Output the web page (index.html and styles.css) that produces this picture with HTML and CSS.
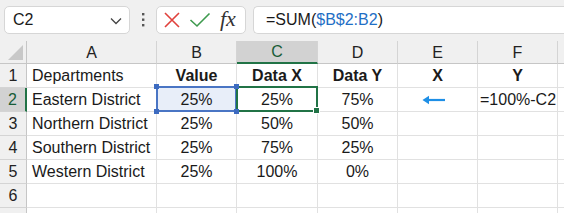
FILE: index.html
```html
<!DOCTYPE html>
<html lang="en">
<head>
  <meta charset="UTF-8">
  <title>Sheet</title>
  <link rel="stylesheet" href="styles.css">
</head>
<body>
  <!-- Formula toolbar -->
  <div class="toolbar">
    <div class="name-box">
      <span>C2</span>
      <svg class="chevron" width="12" height="8" viewBox="0 0 12 8"><path d="M1 1.5 L6 6.5 L11 1.5" fill="none" stroke="#444" stroke-width="1.3"/></svg>
    </div>
    <svg class="grip" width="4" height="16" viewBox="0 0 4 16"><rect x="1" y="1" width="2.4" height="2.4" fill="#555"/><rect x="1" y="6.5" width="2.4" height="2.4" fill="#555"/><rect x="1" y="12" width="2.4" height="2.4" fill="#555"/></svg>
    <div class="fx-buttons">
      <svg width="18" height="18" viewBox="0 0 18 18"><path d="M2 2 L16 16 M16 2 L2 16" stroke="#e0413c" stroke-width="1.6" fill="none"/></svg>
      <svg width="22" height="18" viewBox="0 0 22 18"><path d="M1.5 9 L8 15 L20.5 2.5" stroke="#3e9a4e" stroke-width="1.6" fill="none"/></svg>
      <span class="fx">fx</span>
    </div>
    <div class="formula">=SUM(<span class="ref">$B$2:B2</span>)</div>
  </div>

  <!-- Grid -->
  <div class="sheet">
    <div class="hdr corner"><span class="tri"></span></div>
    <div class="hdr col">A</div>
    <div class="hdr col">B</div>
    <div class="hdr col active">C</div>
    <div class="hdr col">D</div>
    <div class="hdr col">E</div>
    <div class="hdr col">F</div>
    <div class="hdr col"></div>

    <div class="hdr row">1</div>
    <div class="cell left">Departments</div>
    <div class="cell bold">Value</div>
    <div class="cell bold">Data X</div>
    <div class="cell bold">Data Y</div>
    <div class="cell bold">X</div>
    <div class="cell bold">Y</div>
    <div class="cell"></div>

    <div class="hdr row active">2</div>
    <div class="cell left">Eastern District</div>
    <div class="cell ref-cell">25%<i class="h tl"></i><i class="h tr"></i><i class="h bl"></i><i class="h br"></i></div>
    <div class="cell current">25%<i class="fill-handle"></i></div>
    <div class="cell">75%</div>
    <div class="cell arrow-cell"><svg width="24" height="10" viewBox="0 0 24 10"><path d="M23 5 H4" stroke="#1e8fe6" stroke-width="2.2"/><path d="M0.5 5 L7 0.8 L7 9.2 Z" fill="#1e8fe6"/></svg></div>
    <div class="cell left tight">=100%-C2</div>
    <div class="cell"></div>

    <div class="hdr row">3</div>
    <div class="cell left">Northern District</div>
    <div class="cell">25%</div>
    <div class="cell">50%</div>
    <div class="cell">50%</div>
    <div class="cell"></div>
    <div class="cell"></div>
    <div class="cell"></div>

    <div class="hdr row">4</div>
    <div class="cell left">Southern District</div>
    <div class="cell">25%</div>
    <div class="cell">75%</div>
    <div class="cell">25%</div>
    <div class="cell"></div>
    <div class="cell"></div>
    <div class="cell"></div>

    <div class="hdr row">5</div>
    <div class="cell left">Western District</div>
    <div class="cell">25%</div>
    <div class="cell">100%</div>
    <div class="cell">0%</div>
    <div class="cell"></div>
    <div class="cell"></div>
    <div class="cell"></div>

    <div class="hdr row">6</div>
    <div class="cell"></div>
    <div class="cell"></div>
    <div class="cell"></div>
    <div class="cell"></div>
    <div class="cell"></div>
    <div class="cell"></div>
    <div class="cell"></div>

    <div class="hdr row"></div>
    <div class="cell"></div>
    <div class="cell"></div>
    <div class="cell"></div>
    <div class="cell"></div>
    <div class="cell"></div>
    <div class="cell"></div>
    <div class="cell"></div>
  </div>
</body>
</html>
```

FILE: styles.css
```css
body {
  margin: 0;
  font-family: "Liberation Sans", Arial, sans-serif;
  font-size: 16px;
  color: #1a1a1a;
  background-color: #f0f0f0;
  overflow: hidden;
  width: 564px;
  height: 213px;
}

.toolbar {
  display: flex;
  align-items: center;
  height: 41px;
  box-sizing: border-box;
  padding: 4px 0 5px 4px;
}

.name-box {
  display: flex;
  align-items: center;
  justify-content: space-between;
  width: 126px;
  height: 28px;
  box-sizing: border-box;
  padding: 0 7px 0 8px;
  background: #fff;
  border: 1px solid #d6d6d6;
  border-radius: 5px;
}

.chevron {
  margin-top: 1px;
}

.grip {
  margin: 0 11px 0 11px;
}

.fx-buttons {
  display: flex;
  align-items: center;
  width: 90px;
  height: 28px;
  box-sizing: border-box;
  padding: 0 6px 0 6px;
  background: #fff;
  border: 1px solid #d6d6d6;
  border-radius: 5px;
  gap: 8px;
}

.fx {
  font-family: "Liberation Serif", "Times New Roman", serif;
  font-style: italic;
  font-size: 22px;
  line-height: 22px;
  color: #333;
  margin-left: 1px;
  margin-top: -3px;
}

.formula {
  flex: 1;
  height: 28px;
  box-sizing: border-box;
  margin-left: 7px;
  padding-left: 12px;
  line-height: 26px;
  background: #fff;
  border: 1px solid #d6d6d6;
  border-right: none;
  border-radius: 5px 0 0 5px;
}

.formula .ref {
  color: #1f6fc5;
}

.sheet {
  display: grid;
  grid-template-columns: 27px 130px 80px 81px 80px 80px 80px 80px;
  grid-template-rows: 23px repeat(7, 24px);
  background: #fff;
}

.hdr {
  display: flex;
  align-items: center;
  justify-content: center;
  background: #f0f0f0;
  color: #222;
  box-sizing: border-box;
  padding-top: 1px;
}

.hdr.col {
  border-right: 1px solid #d4d4d4;
  border-bottom: 1px solid #c6c6c6;
}

.hdr.row {
  border-right: 1px solid #c6c6c6;
  border-bottom: 1px solid #d4d4d4;
}

.hdr.col.active {
  background: #d2d2d2;
  color: #185c37;
  border-bottom: 2px solid #217346;
}

.hdr.row.active {
  background: #d2d2d2;
  color: #185c37;
  border-right: 2px solid #217346;
}

.corner {
  position: relative;
  border-right: 1px solid #c6c6c6;
  border-bottom: 1px solid #c6c6c6;
}

.tri {
  position: absolute;
  right: 3px;
  bottom: 3px;
  width: 0;
  height: 0;
  border-left: 15px solid transparent;
  border-bottom: 15px solid #c8c8c8;
}

.cell {
  display: flex;
  align-items: center;
  justify-content: center;
  box-sizing: border-box;
  padding-top: 1px;
  border-right: 1px solid #e1e1e1;
  border-bottom: 1px solid #e1e1e1;
  white-space: nowrap;
  position: relative;
}

.cell.left {
  justify-content: flex-start;
  padding-left: 5px;
}

.cell.left.tight {
  padding-left: 2px;
}

.cell.bold {
  font-weight: bold;
}

.arrow-cell {
  padding-right: 8px;
}

/* referenced range highlight */
.ref-cell {
  background: #e8eef9;
}

.ref-cell::after {
  content: "";
  position: absolute;
  top: -2px;
  left: -1px;
  right: -1px;
  bottom: -1px;
  border: 2px solid #4a75c4;
}

.h {
  position: absolute;
  width: 5px;
  height: 5px;
  background: #3d6bc0;
  z-index: 2;
}

.h.tl { top: -4px; left: -3px; }
.h.tr { top: -4px; right: -3px; }
.h.bl { bottom: -3px; left: -3px; }
.h.br { bottom: -3px; right: -3px; }

/* active cell */
.current::after {
  content: "";
  position: absolute;
  top: -2px;
  left: -1px;
  right: -1px;
  bottom: -1px;
  border: 2px solid #217346;
}

.fill-handle {
  position: absolute;
  width: 5px;
  height: 5px;
  right: -3px;
  bottom: -3px;
  background: #217346;
  border: 1px solid #fff;
  z-index: 2;
}
```
